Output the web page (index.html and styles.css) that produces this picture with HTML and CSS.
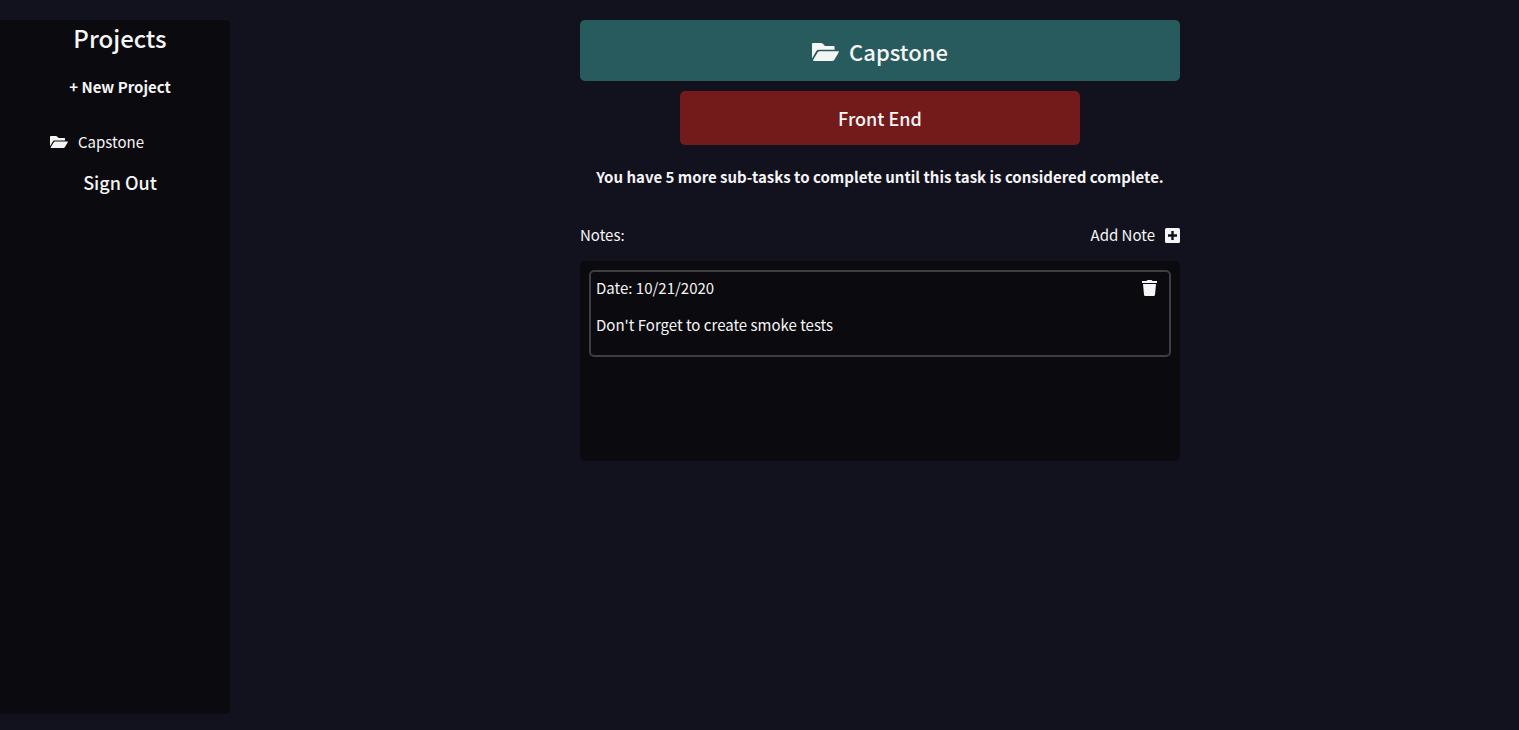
FILE: index.html
```
<!DOCTYPE html>
<html lang="en">
<head>
<meta charset="utf-8">
<title>Projects</title>
<link rel="stylesheet" href="styles.css">
</head>
<body>
<svg class="defs" aria-hidden="true">
  <symbol id="folder-open" viewBox="0 0 27 18">
    <path d="M0 15.500V1Q0 0 1 0H9Q10 0 10.600 .6L13 3H21.500Q22.600 3 22.600 4V6.800H7Q5 6.800 4.200 8.200Z"/>
    <path d="M5.600 9.400Q6.300 8.200 7.600 8.200H27Q26.700 9.500 25.800 11L22.500 16.500Q21.700 18 20.200 18H2Q.8 18 1.200 16.700Z"/>
  </symbol>
</svg>
<div class="layout">
  <nav class="sidebar">
    <h1 class="sidebar-title">Projects</h1>
    <button class="new-project" type="button">+ New Project</button>
    <a class="project-link" href="#capstone"><svg class="icon-folder" aria-hidden="true"><use href="#folder-open"/></svg>Capstone</a>
    <button class="sign-out" type="button">Sign Out</button>
  </nav>
  <main class="content">
    <h2 class="project-banner"><svg class="icon-folder-large" aria-hidden="true"><use href="#folder-open"/></svg>Capstone</h2>
    <h3 class="task-banner">Front End</h3>
    <p class="status">You have 5 more sub-tasks to complete until this task is considered complete.</p>
    <div class="notes-header">
      <span>Notes:</span>
      <button class="add-note" type="button">Add Note
        <svg class="icon-plus" viewBox="0 0 15 15" aria-hidden="true"><path fill-rule="evenodd" d="M1.500 0H13.500Q15 0 15 1.500V13.500Q15 15 13.500 15H1.500Q0 15 0 13.500V1.500Q0 0 1.500 0ZM6.300 3V6.300H3V8.700H6.300V12H8.700V8.700H12V6.300H8.700V3Z"/></svg>
      </button>
    </div>
    <section class="notes">
      <article class="note">
        <div class="note-head">
          <span>Date: 10/21/2020</span>
          <button class="delete-note" type="button" aria-label="Delete note"><svg class="icon-trash" viewBox="0 0 15 16" aria-hidden="true"><path d="M0 1H4.500L5.500 0H9.500L10.500 1H15V3H0ZM1 4H14L13 14.800Q12.900 16 11.700 16H3.300Q2.100 16 2 14.800Z"/></svg></button>
        </div>
        <p class="note-text">Don't Forget to create smoke tests</p>
      </article>
    </section>
  </main>
</div>
</body>
</html>
```
FILE: styles.css
```
* { box-sizing: border-box; }
body {
  margin: 0;
  background: #12111e;
  color: #f5f5f5;
  font: 15px/24px "Noto Sans CJK JP", "Noto Sans", sans-serif;
}
h1, h2, h3, p { margin: 0; }
button {
  padding: 0;
  border: 0;
  background: none;
  color: inherit;
  font: inherit;
  cursor: pointer;
}
a { color: inherit; text-decoration: none; }
svg { display: block; fill: currentColor; }
.defs { display: none; }
.layout {
  display: grid;
  grid-template-columns: 230px 1fr;
  column-gap: 11px;
  padding-top: 20px;
}
.sidebar {
  display: flex;
  flex-direction: column;
  align-items: center;
  height: 95vh;
  padding-left: 10px;
  background: #0b0a0e;
  border-radius: 0 5px 5px 0;
}
.sidebar-title { font-size: 24px; line-height: 36px; font-weight: 500; }
.new-project { margin-top: 19px; font-weight: 700; }
.project-link {
  display: flex;
  align-items: center;
  align-self: flex-start;
  gap: 10px;
  margin: 31px 0 0 40px;
}
.sign-out { margin-top: 16px; font-size: 18px; font-weight: 500; }
.icon-folder { width: 18px; height: 12px; }
.icon-folder-large { width: 27px; height: 18px; }
.content {
  width: 100%;
  max-width: 600px;
  margin: 0 auto;
}
.project-banner {
  display: flex;
  align-items: center;
  justify-content: center;
  gap: 10px;
  padding: 15px 14px 13px;
  border-radius: 5px;
  background: #285b5d;
  font-size: 22px;
  font-weight: 500;
  line-height: 33px;
}
.task-banner {
  max-width: 400px;
  margin: 10px auto 0;
  padding: 15px;
  border-radius: 5px;
  background: #731b1a;
  font-size: 18px;
  font-weight: 500;
  text-align: center;
}
.status {
  margin-top: 20px;
  font-weight: 700;
  text-align: center;
}
.notes-header {
  display: flex;
  justify-content: space-between;
  margin: 34px 0 14px;
}
.add-note { display: flex; align-items: center; gap: 10px; }
.icon-plus { width: 15px; height: 15px; }
.notes {
  min-height: 200px;
  padding: 9px;
  border-radius: 5px;
  background: #0b0a0e;
}
.note {
  padding: 4px 5px 18px;
  border: 2px solid #3e3e40;
  border-radius: 5px;
}
.note-head { display: flex; align-items: center; justify-content: space-between; }
.delete-note { margin-right: 7px; }
.icon-trash { width: 15px; height: 16px; }
.note-text { margin-top: 13px; }
```
